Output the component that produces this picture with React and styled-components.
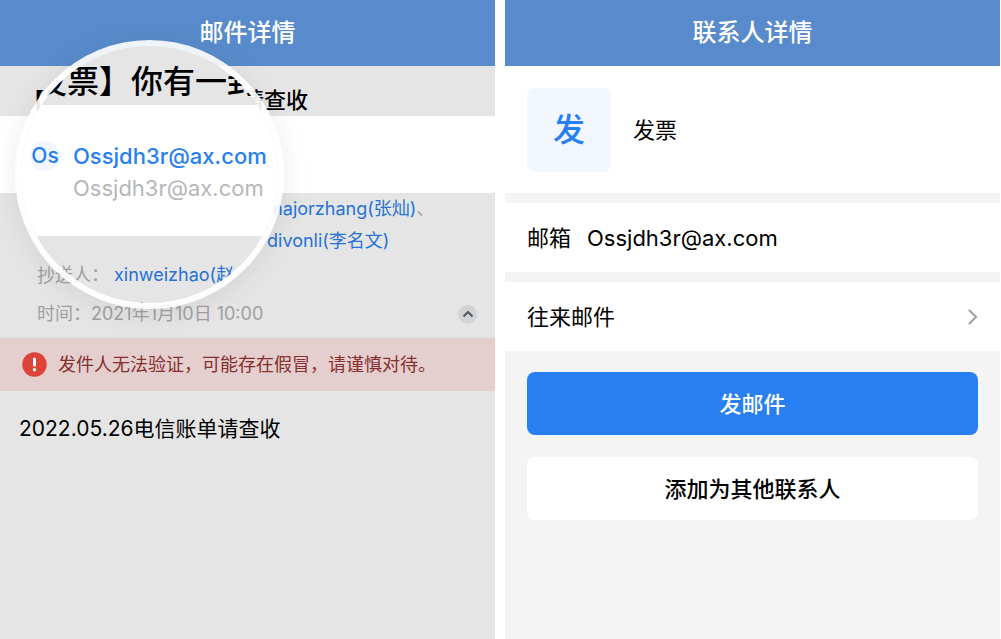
import styled, { createGlobalStyle } from "styled-components";

const GlobalStyle = createGlobalStyle`
  * {
    box-sizing: border-box;
  }
  body {
    margin: 0;
    background-color: #fff;
    color: #000;
    font-family: Inter, "Noto Sans CJK SC", sans-serif;
    font-size: 22px;
    line-height: 32px;
  }
`;

const Screens = styled.div`
  display: grid;
  grid-template-columns: 1fr 1fr;
  gap: 10px;
  min-height: 100vh;
  padding-right: 1px;
`;

const Screen = styled.main`
  position: relative;
  overflow: hidden;
  background-color: ${({ $dimmed }) => ($dimmed ? "#e5e5e5" : "#f4f4f5")};
`;

const Header = styled.header`
  display: flex;
  align-items: center;
  justify-content: center;
  height: 66px;
  background-color: #598bcc;
  color: #fff;
`;

const HeaderTitle = styled.h1`
  margin: 0;
  font-size: 24px;
  line-height: 32px;
  font-weight: 500;
`;

const Subject = styled.h2`
  margin: 0;
  padding: 18px 22px 0;
  height: 50px;
  font-size: 22px;
  font-weight: 500;
  white-space: nowrap;
`;

const SenderSpace = styled.div`
  height: 77px;
  background-color: #fff;
`;

const Details = styled.section`
  height: 145px;
  padding: 0 18px 0 37px;
  border-bottom: 1px solid #dedede;
  font-size: 18px;
  color: #a0a0a0;
`;

const Names = styled.div`
  display: flex;
  flex-direction: column;
  padding-left: 230px;
`;

const NameLink = styled.a`
  color: #2672d9;
  text-decoration: none;
`;

const DetailRow = styled.div`
  display: flex;
  align-items: center;
  justify-content: space-between;
  height: 38px;
`;

const FoldButton = styled.button`
  display: flex;
  align-items: center;
  justify-content: center;
  width: 19px;
  height: 19px;
  padding: 0;
  border: 0;
  border-radius: 50%;
  background-color: #d2d4d6;
  color: #55585c;
`;

const Warning = styled.div`
  display: flex;
  align-items: center;
  gap: 11px;
  height: 53px;
  padding: 0 22px;
  background-color: #e5cece;
  color: #85302f;
  font-size: 18px;
  white-space: nowrap;
`;

const MailBody = styled.p`
  margin: 0;
  padding: 22px 19px;
  font-size: 21px;
`;

const Lens = styled.div`
  position: absolute;
  top: 40px;
  left: 15px;
  width: 269px;
  height: 269px;
  padding: 6px;
  border-radius: 50%;
  background-color: rgba(255, 255, 255, 0.9);
  box-shadow: 0 4px 30px rgba(0, 0, 0, 0.08);
`;

const LensGlass = styled.div`
  height: 100%;
  border-radius: 50%;
  overflow: hidden;
  background-color: #e5e5e5;
`;

const LensSubject = styled.div`
  height: 59px;
  padding-top: 16px;
  margin-left: -18px;
  font-size: 32px;
  line-height: 40px;
  font-weight: 500;
  white-space: nowrap;
`;

const LensSender = styled.div`
  display: grid;
  grid-template-columns: 30px 1fr;
  column-gap: 13px;
  align-items: center;
  align-content: start;
  height: 131px;
  padding: 35px 9px 0;
  background-color: #fff;
`;

const LensAvatar = styled.span`
  display: flex;
  align-items: center;
  justify-content: center;
  width: 30px;
  height: 30px;
  border-radius: 50%;
  background-color: #f1f7ff;
  color: #277ff2;
  font-size: 21px;
  font-weight: 500;
`;

const SenderName = styled.a`
  color: #277ff2;
  font-weight: 500;
  text-decoration: none;
`;

const SenderAddress = styled.span`
  grid-column: 2;
  color: #b5b7ba;
`;

const LensNames = styled.div`
  display: grid;
  grid-template-columns: 77px 1fr;
  row-gap: 3px;
  padding: 23px 0 0 16px;
  color: #a0a0a0;
  font-size: 18px;
  white-space: nowrap;
  a:last-child {
    grid-column: 2;
  }
`;

const Profile = styled.section`
  display: flex;
  align-items: center;
  gap: 22px;
  height: 127px;
  padding: 0 22px;
  background-color: #fff;
`;

const Avatar = styled.div`
  display: flex;
  align-items: center;
  justify-content: center;
  width: 84px;
  height: 84px;
  border-radius: 8px;
  background-color: #f2f7ff;
  color: #277ff2;
  font-size: 32px;
  line-height: 40px;
  font-weight: 500;
`;

const Row = styled.div`
  display: flex;
  align-items: center;
  gap: 16px;
  height: 69px;
  margin-top: 10px;
  padding: 0 22px;
  background-color: #fff;
  color: #000;
  text-decoration: none;
  svg {
    margin-left: auto;
  }
`;

const Actions = styled.div`
  display: flex;
  flex-direction: column;
  gap: 22px;
  padding: 21px 22px;
`;

const ActionButton = styled.button`
  height: 63px;
  border: 0;
  border-radius: 8px;
  background-color: ${({ $primary }) => ($primary ? "#277ff2" : "#fff")};
  color: ${({ $primary }) => ($primary ? "#fff" : "#000")};
  font-family: inherit;
  font-size: 22px;
  line-height: 32px;
  font-weight: 500;
`;

function ChevronUp() {
  return (
    <svg width="12" height="8" viewBox="0 0 12 8" fill="none">
      <path d="M1.5 6.5L6 2L10.5 6.5" stroke="currentColor" strokeWidth="2" />
    </svg>
  );
}

function ChevronRight() {
  return (
    <svg width="10" height="16" viewBox="0 0 10 16" fill="none">
      <path
        d="M1.5 1.5L8 8L1.5 14.5"
        stroke="#a0a3a7"
        strokeWidth="2.2"
        strokeLinecap="round"
      />
    </svg>
  );
}

function AlertIcon() {
  return (
    <svg width="25" height="25" viewBox="0 0 25 25">
      <circle cx="12.5" cy="12.5" r="12.2" fill="#db4437" />
      <rect x="11" y="5.5" width="3" height="9" rx="1.5" fill="#fff" />
      <circle cx="12.5" cy="17.8" r="1.7" fill="#fff" />
    </svg>
  );
}

function MailScreen() {
  return (
    <Screen $dimmed>
      <Header>
        <HeaderTitle>邮件详情</HeaderTitle>
      </Header>
      <Subject>【发票】你有一封发票请查收</Subject>
      <SenderSpace />
      <Details>
        <Names>
          <span>
            <NameLink href="#">majorzhang(张灿)</NameLink>、
          </span>
          <NameLink href="#">divonli(李名文)</NameLink>
        </Names>
        <DetailRow>抄送人：</DetailRow>
        <DetailRow>
          <span>时间：2021年1月10日 10:00</span>
          <FoldButton aria-label="收起">
            <ChevronUp />
          </FoldButton>
        </DetailRow>
      </Details>
      <Warning>
        <AlertIcon />
        发件人无法验证，可能存在假冒，请谨慎对待。
      </Warning>
      <MailBody>2022.05.26电信账单请查收</MailBody>
      <Lens>
        <LensGlass>
          <LensSubject>【发票】你有一封</LensSubject>
          <LensSender>
            <LensAvatar>Os</LensAvatar>
            <SenderName href="#">Ossjdh3r@ax.com</SenderName>
            <SenderAddress>Ossjdh3r@ax.com</SenderAddress>
          </LensSender>
          <LensNames>
            <span>抄送人：</span>
            <NameLink href="#">xinweizhao(赵</NameLink>
            <NameLink href="#">wuhai</NameLink>
          </LensNames>
        </LensGlass>
      </Lens>
    </Screen>
  );
}

function ContactScreen() {
  return (
    <Screen>
      <Header>
        <HeaderTitle>联系人详情</HeaderTitle>
      </Header>
      <Profile>
        <Avatar>发</Avatar>
        <span>发票</span>
      </Profile>
      <Row>
        <span>邮箱</span>
        <span>Ossjdh3r@ax.com</span>
      </Row>
      <Row as="a" href="#">
        往来邮件
        <ChevronRight />
      </Row>
      <Actions>
        <ActionButton $primary>发邮件</ActionButton>
        <ActionButton>添加为其他联系人</ActionButton>
      </Actions>
    </Screen>
  );
}

export default function App() {
  return (
    <>
      <GlobalStyle />
      <Screens>
        <MailScreen />
        <ContactScreen />
      </Screens>
    </>
  );
}
